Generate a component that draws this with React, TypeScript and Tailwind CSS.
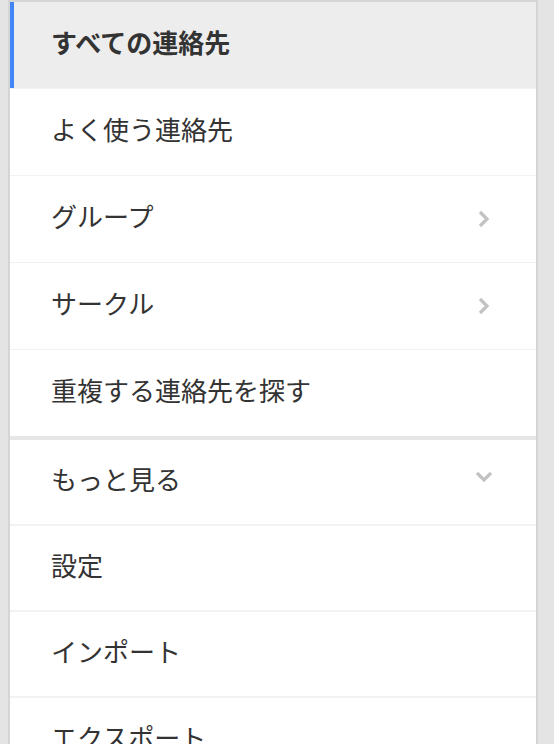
import React from "react";

const font = { fontFamily: '"Noto Sans CJK JP", "Noto Sans", sans-serif' };

function ChevronRight() {
  return (
    <svg width="14" height="20" viewBox="0 0 14 20" className="shrink-0">
      <path d="M3 3 L10 10 L3 17" fill="none" stroke="#c2c2c2" strokeWidth="3.2" strokeLinecap="butt" strokeLinejoin="miter" />
    </svg>
  );
}

function ChevronDown() {
  return (
    <svg width="20" height="14" viewBox="0 0 20 14" className="shrink-0">
      <path d="M3 3 L10 10 L17 3" fill="none" stroke="#c2c2c2" strokeWidth="3.2" strokeLinecap="butt" strokeLinejoin="miter" />
    </svg>
  );
}

type Item = { label: string; icon?: "right" | "down" };

const top: Item[] = [
  { label: "よく使う連絡先" },
  { label: "グループ", icon: "right" },
  { label: "サークル", icon: "right" },
];

const bottom: Item[] = [
  { label: "もっと見る", icon: "down" },
  { label: "設定" },
  { label: "インポート" },
  { label: "エクスポート" },
];

export default function App() {
  return (
    <div className="h-screen overflow-hidden bg-[#e4e4e4] pl-2 pr-4" style={font}>
      <div className="w-[530px] h-full border-l-2 border-r-2 border-t-2 border-[#d5d5d5] bg-white">
        <div className="h-[87px] border-b border-[#f2f2f2] bg-[#ededed] shadow-[inset_4px_0_0_#4285f4] flex items-center pl-[41px] text-[26px] font-bold text-[#333333]">
          <span className="pb-2">すべての連絡先</span>
        </div>
        {top.map((it) => (
          <div
            key={it.label}
            className="h-[87px] border-b border-[#f2f2f2] flex items-center justify-between pl-[41px] pr-[45px] text-[26px] text-[#333333]"
          >
            <span className="pb-2">{it.label}</span>
            {it.icon === "right" && <ChevronRight />}
          </div>
        ))}
        <div className="h-[90px] border-b-[4px] border-[#e6e6e6] flex items-center pl-[41px] text-[26px] text-[#333333]">
          <span className="pb-2">重複する連絡先を探す</span>
        </div>
        {bottom.map((it) => (
          <div
            key={it.label}
            className="h-[86px] border-b-2 border-[#f2f2f2] flex items-center justify-between pl-[41px] pr-[42px] text-[26px] text-[#333333]"
          >
            <span className="pb-2">{it.label}</span>
            {it.icon === "down" && (
              <span className="self-start mt-[30px]">
                <ChevronDown />
              </span>
            )}
          </div>
        ))}
      </div>
    </div>
  );
}
